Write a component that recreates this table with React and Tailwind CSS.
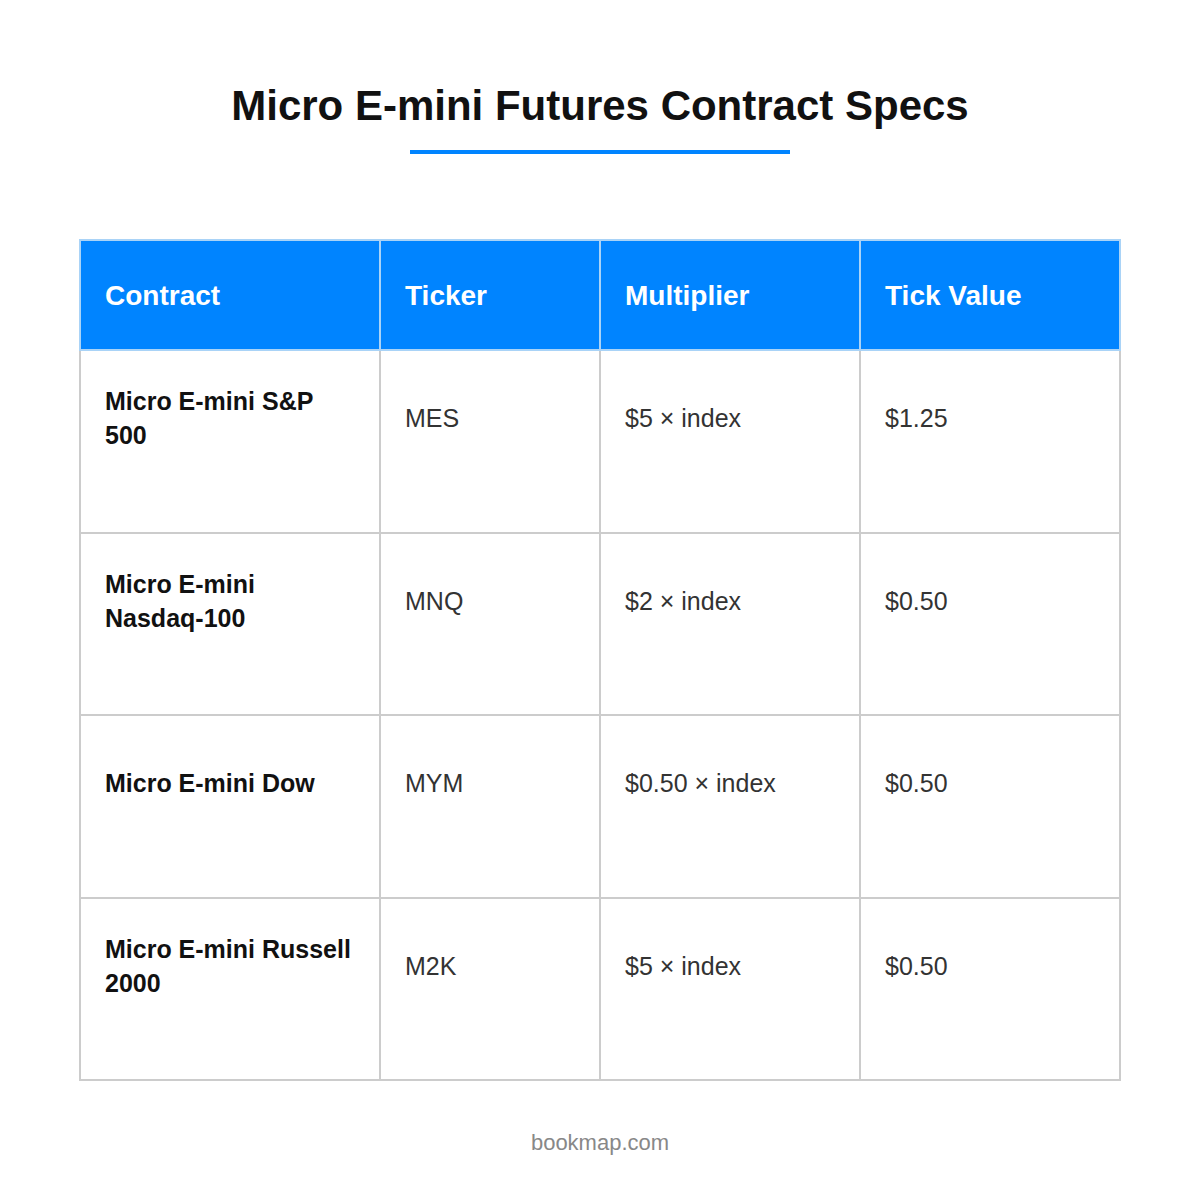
const rows = [
  { name: "Micro E-mini S&P 500", ticker: "MES", mult: "$5 × index", tick: "$1.25" },
  { name: "Micro E-mini Nasdaq-100", ticker: "MNQ", mult: "$2 × index", tick: "$0.50" },
  { name: "Micro E-mini Dow", ticker: "MYM", mult: "$0.50 × index", tick: "$0.50" },
  { name: "Micro E-mini Russell 2000", ticker: "M2K", mult: "$5 × index", tick: "$0.50" },
];

const cols = "grid grid-cols-[300px_220px_260px_260px]";

export default function App() {
  return (
    <div
      className="min-h-[1200px] bg-white flex flex-col items-center"
      style={{ fontFamily: '"Liberation Sans", Arial, sans-serif' }}
    >
      {/* title */}
      <h1 className="mt-[81px] text-[42px] leading-[50px] font-bold text-[#111]">
        Micro E-mini Futures Contract Specs
      </h1>
      <div className="mt-[19px] w-[380px] h-[4px] bg-[#0084ff]" />

      {/* table */}
      <div className="mt-[85px] w-[1042px]">
        <div className={`${cols} bg-[#0084ff] border-l-2 border-t-2 border-[#a9d3f7]`}>
          {["Contract", "Ticker", "Multiplier", "Tick Value"].map((h) => (
            <div
              key={h}
              className="h-[110px] flex items-center pl-[24px] pt-[2px] border-r-2 border-b-2 border-[#a9d3f7] text-white text-[28px] font-bold"
            >
              {h}
            </div>
          ))}
        </div>
        <div className="border-l-2 border-[#cccccc]">
          {rows.map((r) => (
            <div key={r.ticker} className={cols}>
              <Cell bold>{r.name}</Cell>
              <Cell>{r.ticker}</Cell>
              <Cell>{r.mult}</Cell>
              <Cell>{r.tick}</Cell>
            </div>
          ))}
        </div>
      </div>

      <div className="mt-[45px] text-[22px] text-[#888888]">bookmap.com</div>
    </div>
  );
}

function Cell({ children, bold }) {
  return (
    <div
      className={`h-[182.5px] flex items-center pl-[24px] pr-[20px] pb-[46px] border-r-2 border-b-2 border-[#cccccc] text-[25px] leading-[34px] ${
        bold ? "font-bold text-[#111]" : "text-[#333]"
      }`}
    >
      <span>{children}</span>
    </div>
  );
}
